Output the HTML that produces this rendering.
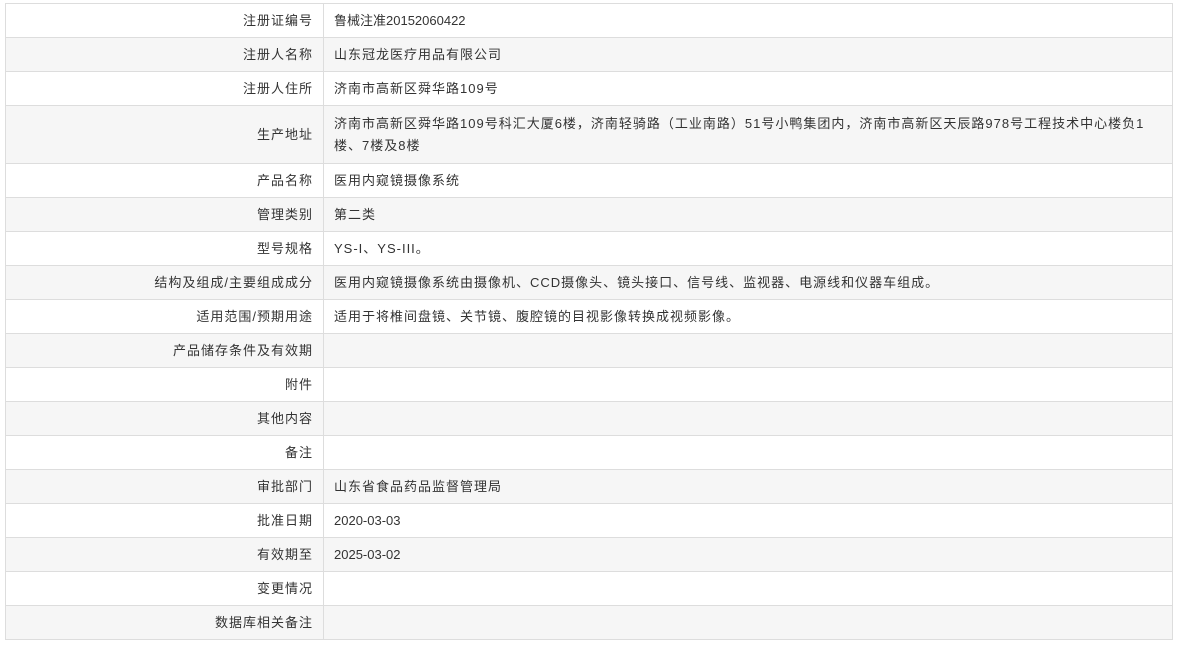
<!DOCTYPE html>
<html><head><meta charset="utf-8"><style>
body{margin:0;background:#fff;font-family:"Liberation Sans","Noto Sans CJK SC",sans-serif;font-size:13px;color:#333}
table{position:absolute;left:5px;top:3px;width:1168px;border-collapse:collapse;table-layout:fixed}
td{border:1px solid #ddd;height:33px;padding:0 10px;line-height:22px;letter-spacing:1px}
td.l{width:297px;text-align:right}
td.n{letter-spacing:0}
tr:nth-child(even) td{background:#f6f6f6}
tr.t td{height:57px}
</style></head><body>
<table>
<tr><td class="l">注册证编号</td><td class="n">鲁械注准20152060422</td></tr>
<tr><td class="l">注册人名称</td><td>山东冠龙医疗用品有限公司</td></tr>
<tr><td class="l">注册人住所</td><td>济南市高新区舜华路109号</td></tr>
<tr class="t"><td class="l">生产地址</td><td>济南市高新区舜华路109号科汇大厦6楼，济南轻骑路（工业南路）51号小鸭集团内，济南市高新区天辰路978号工程技术中心楼负1<br>楼、7楼及8楼</td></tr>
<tr><td class="l">产品名称</td><td>医用内窥镜摄像系统</td></tr>
<tr><td class="l">管理类别</td><td>第二类</td></tr>
<tr><td class="l">型号规格</td><td>YS-I、YS-III。</td></tr>
<tr><td class="l">结构及组成/主要组成成分</td><td>医用内窥镜摄像系统由摄像机、CCD摄像头、镜头接口、信号线、监视器、电源线和仪器车组成。</td></tr>
<tr><td class="l">适用范围/预期用途</td><td>适用于将椎间盘镜、关节镜、腹腔镜的目视影像转换成视频影像。</td></tr>
<tr><td class="l">产品储存条件及有效期</td><td></td></tr>
<tr><td class="l">附件</td><td></td></tr>
<tr><td class="l">其他内容</td><td></td></tr>
<tr><td class="l">备注</td><td></td></tr>
<tr><td class="l">审批部门</td><td>山东省食品药品监督管理局</td></tr>
<tr><td class="l">批准日期</td><td class="n">2020-03-03</td></tr>
<tr><td class="l">有效期至</td><td class="n">2025-03-02</td></tr>
<tr><td class="l">变更情况</td><td></td></tr>
<tr><td class="l">数据库相关备注</td><td></td></tr>
</table>
</body></html>
